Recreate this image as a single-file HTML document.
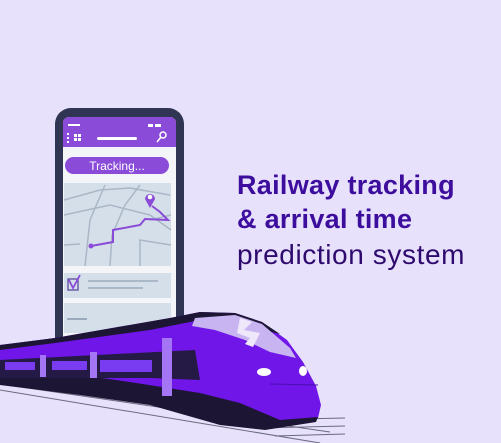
<!DOCTYPE html>
<html><head><meta charset="utf-8"><style>
body{margin:0;width:501px;height:443px;overflow:hidden;background:#e7e1fb;font-family:"Liberation Sans",sans-serif}
.t{position:absolute;left:237px;color:#3d0e9e;font-size:27px;line-height:32px;white-space:nowrap}
</style></head><body>
<svg width="501" height="443" style="position:absolute;left:0;top:0">
<rect x="55" y="108" width="129" height="250" rx="16" fill="#2f3552"/>
<rect x="63" y="117" width="113" height="235" rx="6" fill="#f4f5f9"/>
<path d="M63 123 a6 6 0 0 1 6 -6 h101 a6 6 0 0 1 6 6 v24 h-113z" fill="#8a4bd8"/>
<rect x="68" y="124" width="12" height="2" fill="#fff"/>
<rect x="67" y="133" width="2" height="2" fill="#fff"/><rect x="67" y="137" width="2" height="2" fill="#fff"/><rect x="67" y="141" width="2" height="2" fill="#fff"/>
<rect x="74" y="134" width="3" height="3" fill="#fff"/><rect x="78" y="134" width="3" height="3" fill="#fff"/><rect x="74" y="138" width="3" height="3" fill="#fff"/><rect x="78" y="138" width="3" height="3" fill="#fff"/>
<rect x="97" y="137" width="40" height="3" rx="1.5" fill="#fff"/>
<circle cx="163" cy="135" r="3" fill="none" stroke="#fff" stroke-width="1.5"/><line x1="161" y1="137" x2="157" y2="142" stroke="#fff" stroke-width="1.5"/>
<rect x="148" y="124" width="5" height="3" fill="#fff"/><rect x="155" y="124" width="6" height="3" fill="#fff"/>
<rect x="65" y="157" width="104" height="17" rx="8.5" fill="#8a4bd8"/>
<text x="117" y="170" text-anchor="middle" font-size="12" fill="#fff" font-family="Liberation Sans">Tracking...</text>
<rect x="64" y="183" width="107" height="83" fill="#d5dfe9"/>
<g stroke="#a9b7c6" stroke-width="1.5" fill="none">
<path d="M64 200 L100 190 L130 188 L170 195"/><path d="M64 215 L110 205 L150 215 L171 230"/>
<path d="M85 266 L90 220 L105 185"/><path d="M110 266 L112 235 L125 205 L140 185"/>
<path d="M64 245 L80 244"/><path d="M140 266 L140 240 L171 245"/><path d="M150 220 L171 215"/>
</g>
<path d="M91 246 L113 242 L113 230 L140 225 L145 219 L168 220 L160 212 L152 206" stroke="#8a4bd8" stroke-width="2" fill="none"/>
<circle cx="91" cy="246" r="2.5" fill="#8a4bd8"/>
<path d="M150 208 L145 199 a5 5 0 1 1 10 0z" fill="#8a4bd8"/><circle cx="150" cy="197" r="2.3" fill="#fff"/>
<rect x="64" y="273" width="107" height="25" fill="#d5dfe9"/>
<rect x="68" y="279" width="10" height="11" fill="none" stroke="#5b4a9c" stroke-width="1.3"/>
<path d="M69 280 L73 288 L80 275" stroke="#8a4bd8" stroke-width="1.8" fill="none"/>
<rect x="88" y="280" width="70" height="2" fill="#aab8c8"/><rect x="88" y="287" width="55" height="2" fill="#aab8c8"/>
<rect x="64" y="303" width="107" height="30" fill="#d5dfe9"/>
<rect x="67" y="318" width="20" height="2" fill="#9aa9bb"/>
<g stroke="#6a6a80" stroke-width="1" fill="none">
<path d="M0 384 L330 432"/><path d="M0 390 L320 443"/><path d="M250 420 L345 418"/><path d="M260 428 L345 426"/><path d="M275 436 L345 434"/>
</g>
<path d="M0 345 L55 338 L170 318 L200 312 L235 313 L262 322 L287 340 L303 362 L316 386 L321 405 L318 418 L270 428 L230 423 L170 405 L100 393 L40 385 L0 380Z" fill="#7016e8"/>
<path d="M0 368 L60 372 L130 382 L200 393 L240 403 L280 420 L318 417 L316 422 L265 430 L220 425 L150 405 L80 395 L0 385Z" fill="#1c1533"/>
<path d="M0 345 L55 338 L170 318 L200 312 L235 313 L262 322 L280 334 L230 322 L200 320 L150 330 L55 343 L0 350Z" fill="#1c1533"/>
<path d="M195 318 L235 315 L262 324 L290 348 L296 358 L270 352 L245 340 L215 330 L192 326Z" fill="#c9b4f2"/>
<path d="M240 318 L252 322 L244 330 L260 333 L253 347 L245 344 L250 338 L237 333Z" fill="#efe8fb"/>
<path d="M0 360 L195 350 L200 380 L150 378 L0 378Z" fill="#241a45"/>
<rect x="5" y="362" width="30" height="8" fill="#7a3cf0"/><rect x="52" y="361" width="35" height="9" fill="#7a3cf0"/><rect x="100" y="360" width="52" height="12" fill="#7a3cf0"/>
<rect x="40" y="355" width="6" height="22" fill="#a475f5"/><rect x="90" y="352" width="7" height="26" fill="#a475f5"/><rect x="162" y="338" width="10" height="58" fill="#a475f5"/>
<ellipse cx="264" cy="372" rx="7" ry="4" fill="#fff"/><ellipse cx="303" cy="371" rx="4" ry="5" fill="#fff"/>
<path d="M270 384 L318 385" stroke="#4a0fb0" stroke-width="1" fill="none"/>
</svg>
<div class="t" style="top:169px;font-weight:bold;letter-spacing:0.3px">Railway tracking</div>
<div class="t" style="top:203px;font-weight:bold;letter-spacing:0.3px">&amp; arrival time</div>
<div class="t" style="top:239px;color:#2e0a6e;font-size:28px;letter-spacing:0.6px">prediction system</div>
</body></html>
